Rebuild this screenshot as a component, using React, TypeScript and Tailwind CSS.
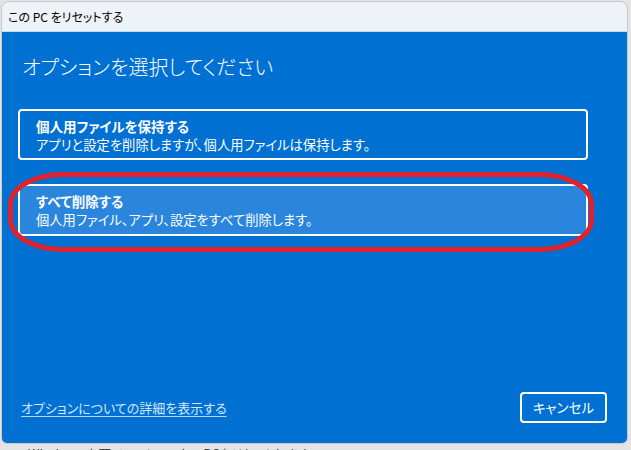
import React from 'react'

const FONT = "font-['Segoe_UI','Noto_Sans_CJK_JP',sans-serif] [font-feature-settings:'palt']"

function OptionCard({
  title,
  desc,
  selected,
}: {
  title: string
  desc: string
  selected?: boolean
}) {
  return (
    <div
      className={`w-[570px] rounded-[4px] border-2 border-white pl-[16px] pt-[6px] pb-[3px] text-white ${
        selected ? 'bg-[#2a86dc] pb-[4px]' : 'bg-[#0070d3]'
      }`}
    >
      <div className="text-[13.5px] font-bold leading-[18px]">{title}</div>
      <div className="text-[13.3px] leading-[20px]">{desc}</div>
    </div>
  )
}

export default function App() {
  return (
    <div className={`relative w-[631px] h-[450px] overflow-hidden bg-[#e4e4e4] ${FONT}`}>
      {/* Dialog window */}
      <div className="ml-px mt-px w-[627px] h-[443px] flex flex-col overflow-hidden rounded-t-[8px] rounded-b-[6px] border border-[#c9c9c9]">
        <div className="h-[30px] flex-shrink-0 flex items-center px-[6px] bg-[#eef2f9] border-b border-[#c4d9ef] text-[12px] text-black">
          この PC をリセットする
        </div>

        <div className="flex-1 flex flex-col bg-[#0070d3] px-[16px] pt-[21px] pb-[20px]">
          <h1 className="ml-[4px] text-[20px] font-light leading-[28px] text-white">
            オプションを選択してください
          </h1>

          <div className="mt-[28px] flex flex-col gap-[24px]">
            <OptionCard
              title="個人用ファイルを保持する"
              desc="アプリと設定を削除しますが、個人用ファイルは保持します。"
            />
            <OptionCard
              title="すべて削除する"
              desc="個人用ファイル、アプリ、設定をすべて削除します。"
              selected
            />
          </div>

          <div className="flex-1" />

          <div className="flex items-center justify-between pl-[3px] pr-[4px]">
            <a className="text-[13px] text-[#d7e8fa] underline underline-offset-[3px] decoration-[#b9d6f5]">
              オプションについての詳細を表示する
            </a>
            <button className="w-[87px] h-[31px] rounded-[4px] border-2 border-white text-[13.5px] text-white">
              キャンセル
            </button>
          </div>
        </div>
      </div>

      {/* Text of the settings page behind, mostly cut off */}
      <div className="pl-[28px] pt-px text-[13px] leading-[18px] text-[#444]">
        Windows を再インストールしてPCをリセットします
      </div>

      {/* Red highlight drawn over the second option */}
      <div className="absolute left-[8px] top-[172px] w-[586px] h-[80px] rounded-[55px/32px] border-[5px] border-[#e3212b] pointer-events-none" />
    </div>
  )
}
